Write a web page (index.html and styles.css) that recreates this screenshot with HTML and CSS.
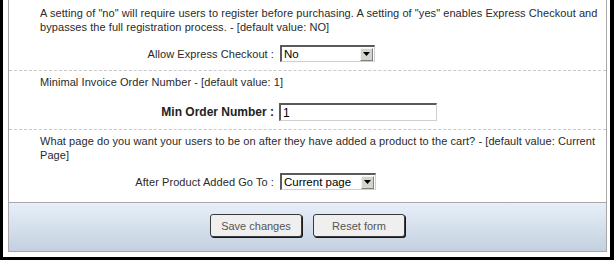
FILE: index.html
```html
<!DOCTYPE html>
<html lang="en">
<head>
    <meta charset="UTF-8">
    <meta name="viewport" content="width=device-width, initial-scale=1.0">
    <title>Checkout settings</title>
    <link rel="stylesheet" href="styles.css">
</head>
<body>
    <div class="frame">
        <form class="panel">
            <div class="settings">
                <!-- Express checkout -->
                <div class="setting">
                    <p class="desc">A setting of "no" will require users to register before purchasing. A setting of "yes" enables Express Checkout and bypasses the full registration process. - [default value: NO]</p>
                    <div class="field">
                        <label class="field-label" for="expressCheckout">Allow Express Checkout :</label>
                        <div class="select select-short">
                            <select id="expressCheckout">
                                <option>No</option>
                                <option>Yes</option>
                            </select>
                            <span class="select-btn"><svg width="7" height="4" viewBox="0 0 7 4"><path d="M0 0h7L3.5 4z" fill="#000"/></svg></span>
                        </div>
                    </div>
                </div>

                <!-- Min order number -->
                <div class="setting">
                    <p class="desc">Minimal Invoice Order Number - [default value: 1]</p>
                    <div class="field field-text">
                        <label class="field-label bold" for="minOrder">Min Order Number :</label>
                        <input class="text-input" id="minOrder" type="text" value="1">
                    </div>
                </div>

                <!-- After add to cart -->
                <div class="setting">
                    <p class="desc">What page do you want your users to be on after they have added a product to the cart? - [default value: Current Page]</p>
                    <div class="field">
                        <label class="field-label" for="afterAdd">After Product Added Go To :</label>
                        <div class="select">
                            <select id="afterAdd">
                                <option>Current page</option>
                                <option>Cart page</option>
                            </select>
                            <span class="select-btn"><svg width="7" height="4" viewBox="0 0 7 4"><path d="M0 0h7L3.5 4z" fill="#000"/></svg></span>
                        </div>
                    </div>
                </div>
            </div>

            <div class="actions">
                <button type="submit" class="btn">Save changes</button>
                <button type="reset" class="btn">Reset form</button>
            </div>
        </form>
    </div>
</body>
</html>
```

FILE: styles.css
```css
body {
    margin: 0;
    font-family: "Liberation Sans", Arial, sans-serif;
    font-size: 11px;
    color: #2a2a2a;
    background-color: #fff;
}
.frame {
    width: 614px;
    box-sizing: border-box;
    border-left: 3px solid #000;
    border-right: 4px solid #000;
    border-bottom: 3px solid #000;
    padding: 0 3px 5px 5px;
    background-color: #fff;
}
.panel {
    margin: 0;
    border: 1px solid #a8a8a8;
    border-top: none;
}
.settings {
    padding-top: 2px;
}
.setting {
    padding: 4px 0 8px;
    border-bottom: 1px dashed #c8c8c8;
}
.setting:last-child {
    border-bottom: none;
    padding-bottom: 12px;
}
.desc {
    margin: 0;
    padding: 0 4px 0 31px;
    line-height: 14px;
    letter-spacing: 0.07px;
}
.field {
    display: grid;
    grid-template-columns: 265px auto;
    column-gap: 6px;
    align-items: center;
    justify-items: start;
    margin-top: 11px;
}
.field-text {
    margin-top: 14px;
    column-gap: 5px;
}
.field-label {
    justify-self: end;
    white-space: nowrap;
    letter-spacing: 0.07px;
}
.field-label.bold {
    font-weight: bold;
    font-size: 12px;
    letter-spacing: 0;
    color: #222;
}
.select {
    display: flex;
    align-items: center;
    width: 96px;
    height: 17px;
    box-sizing: border-box;
    border-style: solid;
    border-width: 2px 1px 1px 2px;
    border-color: #5a5a5a #d0d0d0 #d0d0d0 #5a5a5a;
    background-color: #fff;
}
.select-short {
    width: 95px;
}
.select select {
    -webkit-appearance: none;
    appearance: none;
    flex: 1;
    min-width: 0;
    height: 14px;
    border: none;
    padding: 0 0 0 2px;
    margin: 0;
    background: transparent;
    font-family: "Liberation Sans", Arial, sans-serif;
    font-size: 11.5px;
    color: #000;
    outline: none;
}
.select-btn {
    display: flex;
    align-items: center;
    justify-content: center;
    width: 11px;
    height: 11px;
    margin-right: 1px;
    border: 1px solid;
    border-color: #f4f4f4 #808080 #808080 #f4f4f4;
    background-color: #d6d3ce;
}
.text-input {
    width: 158px;
    height: 18px;
    box-sizing: border-box;
    border-style: solid;
    border-width: 2px 1px 1px 2px;
    border-color: #5a5a5a #d0d0d0 #d0d0d0 #5a5a5a;
    padding: 0 2px;
    margin: 0;
    font-family: "Liberation Sans", Arial, sans-serif;
    font-size: 12px;
    color: #000;
    outline: none;
}
.actions {
    display: flex;
    justify-content: center;
    gap: 11px;
    height: 49px;
    box-sizing: border-box;
    padding-top: 11px;
    border-top: 1px solid #a8a8a8;
    background: linear-gradient(#e7f0f9, #c4d0e0);
}
.btn {
    width: 92px;
    height: 23px;
    padding: 0;
    border: 1px solid #3a3a3a;
    border-radius: 3px;
    box-shadow: 1px 1px 0 #1a1a1a;
    background-color: #efefef;
    font-family: "Liberation Sans", Arial, sans-serif;
    font-size: 11px;
    color: #555;
    cursor: pointer;
}
```
